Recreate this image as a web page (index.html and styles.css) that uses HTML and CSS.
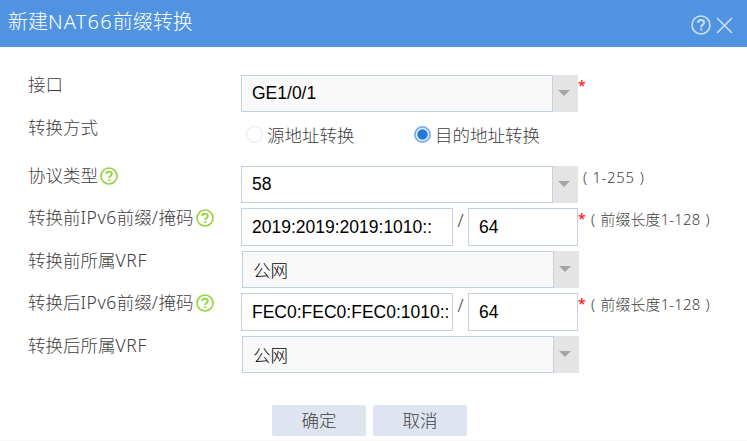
FILE: index.html
```html
<!DOCTYPE html>
<html lang="zh-CN">
<head>
    <meta charset="UTF-8">
    <meta name="viewport" content="width=device-width, initial-scale=1.0">
    <title>新建NAT66前缀转换</title>
    <link rel="stylesheet" href="styles.css">
</head>
<body>

    <div class="dialog">
        <!-- Title bar -->
        <div class="dialog-header">
            <h2>新建<span class="title-latin">NAT66</span>前缀转换</h2>
            <div class="header-tools">
                <svg class="header-help" viewBox="0 0 20 20">
                    <circle cx="10" cy="10" r="9"/>
                    <path class="mark" d="M7 7.8C7 5.9 8.2 5 10 5s3 1 3 2.6c0 2.2-2.8 2.2-2.8 4.6M10.2 13.6v2"/>
                </svg>
                <svg class="header-close" viewBox="0 0 17 17">
                    <path d="M1 1l15 15M16 1L1 16"/>
                </svg>
            </div>
        </div>

        <form class="dialog-body">
            <div class="row">
                <label class="name">接口</label>
                <div class="select readonly">
                    <input type="text" value="GE1/0/1" readonly>
                    <span class="arrow"></span>
                </div>
                <span class="required">*</span>
            </div>

            <div class="row row-radio">
                <label class="name">转换方式</label>
                <label class="radio radio-source"><span class="dot"></span>源地址转换</label>
                <label class="radio radio-dest"><span class="dot checked"></span>目的地址转换</label>
            </div>

            <div class="row row-short">
                <label class="name">协议类型<svg class="help" viewBox="0 0 18 18"><circle cx="9" cy="9" r="8"/><path class="mark" d="M6.2 7C6.2 5.4 7.3 4.6 9 4.6s2.8.9 2.8 2.3c0 2-2.6 2-2.6 4M9.2 12.2v1.8"/></svg></label>
                <div class="select">
                    <input type="text" value="58">
                    <span class="arrow"></span>
                </div>
                <span class="hint hint-range">( <span class="range">1-255</span> )</span>
            </div>

            <div class="row">
                <label class="name">转换前<span class="latin">IPv6</span>前缀<span class="latin">/</span>掩码<svg class="help" viewBox="0 0 18 18"><circle cx="9" cy="9" r="8"/><path class="mark" d="M6.2 7C6.2 5.4 7.3 4.6 9 4.6s2.8.9 2.8 2.3c0 2-2.6 2-2.6 4M9.2 12.2v1.8"/></svg></label>
                <input class="prefix" type="text" value="2019:2019:2019:1010::">
                <span class="slash">/</span>
                <input class="mask" type="text" value="64">
                <span class="required">*</span>
                <span class="hint">( <span class="range">前缀长度1-128</span> )</span>
            </div>

            <div class="row row-short row-vrf">
                <label class="name">转换前所属<span class="latin">VRF</span></label>
                <div class="select readonly">
                    <input type="text" value="公网" readonly>
                    <span class="arrow"></span>
                </div>
            </div>

            <div class="row">
                <label class="name">转换后<span class="latin">IPv6</span>前缀<span class="latin">/</span>掩码<svg class="help" viewBox="0 0 18 18"><circle cx="9" cy="9" r="8"/><path class="mark" d="M6.2 7C6.2 5.4 7.3 4.6 9 4.6s2.8.9 2.8 2.3c0 2-2.6 2-2.6 4M9.2 12.2v1.8"/></svg></label>
                <input class="prefix" type="text" value="FEC0:FEC0:FEC0:1010::">
                <span class="slash">/</span>
                <input class="mask" type="text" value="64">
                <span class="required">*</span>
                <span class="hint">( <span class="range">前缀长度1-128</span> )</span>
            </div>

            <div class="row row-vrf">
                <label class="name">转换后所属<span class="latin">VRF</span></label>
                <div class="select readonly">
                    <input type="text" value="公网" readonly>
                    <span class="arrow"></span>
                </div>
            </div>

            <!-- Buttons -->
            <div class="buttons">
                <button type="button">确定</button>
                <button type="button">取消</button>
            </div>
        </form>
    </div>

</body>
</html>
```

FILE: styles.css
```css
* {
    box-sizing: border-box;
}

body {
    margin: 0;
    background-color: #fff;
    color: #404040;
    font-family: "Noto Sans", "Noto Sans CJK SC", sans-serif;
    font-size: 17.5px;
    font-weight: 300;
    overflow: hidden;
}

.dialog {
    height: 441px;
    border-bottom: 1px solid #f8f8f8;
}

/* Title bar */
.dialog-header {
    display: flex;
    justify-content: space-between;
    height: 47px;
    padding: 0 14px 0 8px;
    background-color: #5094e1;
    color: #fff;
}

h2 {
    margin: 0;
    font-size: 20px;
    font-weight: 300;
    line-height: 43px;
    white-space: nowrap;
}

.title-latin {
    letter-spacing: 1.2px;
}

.header-tools {
    display: flex;
    gap: 5px;
    padding-top: 15px;
}

.header-tools svg {
    fill: none;
    stroke: #cbe0f8;
    stroke-width: 1.6;
}

.header-help {
    width: 20px;
    height: 20px;
}

.header-help .mark {
    stroke-width: 2.1;
}

.header-close {
    width: 17px;
    height: 17px;
    margin-top: 2px;
}

/* Form rows */
.dialog-body {
    padding: 28px 0 0 28px;
}

.row {
    display: flex;
    align-items: flex-start;
    height: 43px;
}

.row-short {
    height: 42px;
}

.row-radio {
    height: 48px;
}

.name {
    display: flex;
    width: 213px;
    flex-shrink: 0;
    line-height: 18px;
    white-space: nowrap;
}

.row-vrf .name {
    width: 214px;
}

.latin {
    letter-spacing: 0.6px;
}

.help {
    width: 18px;
    height: 18px;
    margin: 1px 0 0 2px;
    fill: none;
    stroke: #92d53d;
    stroke-width: 1.6;
}

.help .mark {
    stroke-width: 1.9;
}

/* Inputs */
input {
    height: 38px;
    padding: 0 0 0 10px;
    border: 1px solid #c3d0e3;
    border-radius: 0;
    outline: none;
    background-color: #fff;
    color: #000;
    font-family: "Liberation Sans", "Noto Sans CJK SC", sans-serif;
    font-size: 17.5px;
    font-weight: 300;
}

.prefix {
    width: 212px;
}

.mask {
    width: 110px;
}

.select {
    display: flex;
    width: 337px;
    height: 37px;
    background-color: #e4e4e4;
}

.select input {
    width: 312px;
    height: 37px;
}

.readonly input {
    background-color: #f9f9f9;
}

.arrow {
    width: 0;
    height: 0;
    margin: 15px 0 0 5px;
    border-left: 6px solid transparent;
    border-right: 6px solid transparent;
    border-top: 6px solid #a5a5a5;
}

.slash {
    width: 15px;
    text-align: center;
    line-height: 24px;
}

.required {
    width: 8px;
    color: #f00;
    font-size: 14px;
    font-weight: 400;
    line-height: 22px;
}

.hint {
    margin-left: 5px;
    font-size: 14.8px;
    line-height: 22px;
    letter-spacing: 0.25px;
    word-spacing: 1px;
    white-space: nowrap;
}

.hint-range .range {
    letter-spacing: 0.7px;
}

/* Radios */
.radio {
    display: flex;
    align-items: center;
    height: 32px;
    gap: 4px;
    white-space: nowrap;
}

.radio-source {
    width: 168px;
    margin-left: 5px;
}

.dot {
    width: 17px;
    height: 17px;
    margin-top: 1px;
    border: 1px solid #e5e5e5;
    border-radius: 50%;
}

.dot.checked {
    border: 2px solid #80b1ec;
    background: radial-gradient(circle, #2378d9 4.8px, #fff 5.6px);
}

/* Buttons */
.buttons {
    display: flex;
    gap: 7px;
    margin: 26px 0 0 244px;
}

button {
    width: 94px;
    height: 31px;
    padding: 0;
    border: none;
    border-radius: 2px;
    background-color: #dfe5f0;
    color: #404040;
    font-family: inherit;
    font-size: 17.5px;
    font-weight: 300;
    line-height: 31px;
}
```
